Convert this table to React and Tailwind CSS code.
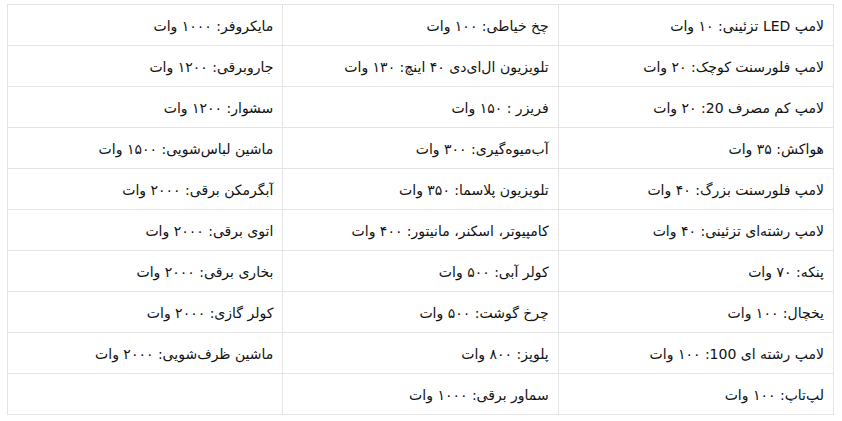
import React from "react";

const rows = [
  ["لامپ LED تزئینی: ۱۰ وات", "چخ خیاطی: ۱۰۰ وات", "مایکروفر: ۱۰۰۰ وات"],
  ["لامپ فلورسنت کوچک: ۲۰ وات", "تلویزیون ال‌ای‌دی ۴۰ اینچ: ۱۳۰ وات", "جاروبرقی: ۱۲۰۰ وات"],
  ["لامپ کم مصرف 20: ۲۰ وات", "فریزر : ۱۵۰ وات", "سشوار: ۱۲۰۰ وات"],
  ["هواکش: ۳۵ وات", "آب‌میوه‌گیری: ۳۰۰ وات", "ماشین لباس‌شویی: ۱۵۰۰ وات"],
  ["لامپ فلورسنت بزرگ: ۴۰ وات", "تلویزیون پلاسما: ۳۵۰ وات", "آبگرمکن برقی: ۲۰۰۰ وات"],
  ["لامپ رشته‌ای تزئینی: ۴۰ وات", "کامپیوتر، اسکنر، مانیتور: ۴۰۰ وات", "اتوی برقی: ۲۰۰۰ وات"],
  ["پنکه: ۷۰ وات", "کولر آبی: ۵۰۰ وات", "بخاری برقی: ۲۰۰۰ وات"],
  ["یخچال: ۱۰۰ وات", "چرخ گوشت: ۵۰۰ وات", "کولر گازی: ۲۰۰۰ وات"],
  ["لامپ رشته ای 100: ۱۰۰ وات", "پلوپز: ۸۰۰ وات", "ماشین ظرف‌شویی: ۲۰۰۰ وات"],
  ["لپ‌تاپ: ۱۰۰ وات", "سماور برقی: ۱۰۰۰ وات", ""],
];

export default function App() {
  return (
    <div className="bg-white w-[842px] h-[421px] pt-1 pl-[7px] pr-2" dir="rtl">
      <table
        className="w-[827px] table-fixed border-collapse text-[14px] text-[#111]"
        style={{ fontFamily: '"DejaVu Sans", sans-serif' }}
      >
        <tbody>
          {rows.map((row, i) => (
            <tr key={i} className="h-[41px]">
              {row.map((cell, j) => (
                <td
                  key={j}
                  className="border border-[#e4e4e4] px-[9px] pt-[3px] text-right align-middle"
                >
                  {cell}
                </td>
              ))}
            </tr>
          ))}
        </tbody>
      </table>
    </div>
  );
}
